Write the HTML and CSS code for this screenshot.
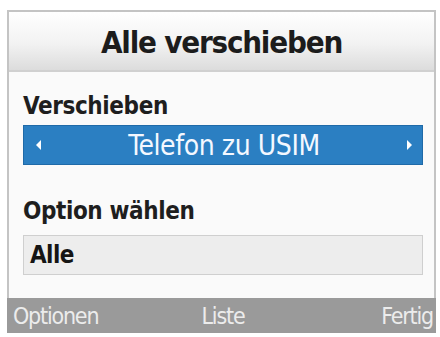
FILE: index.html
```html
<!DOCTYPE html>
<html lang="de">
<head>
<meta charset="utf-8">
<link rel="stylesheet" href="styles.css">
</head>
<body>
<div class="screen">
  <div class="title">Alle verschieben</div>
  <div class="content">
    <div class="label first">Verschieben</div>
    <div class="selector">
      <span class="arrow left"></span>
      <span class="sel-text">Telefon zu USIM</span>
      <span class="arrow right"></span>
    </div>
    <div class="label second">Option wählen</div>
    <div class="field">Alle</div>
  </div>
  <div class="softkeys">
    <span class="sk sk-left">Optionen</span>
    <span class="sk sk-mid">Liste</span>
    <span class="sk sk-right">Fertig</span>
  </div>
</div>
</body>
</html>
```
FILE: styles.css
```css
html, body {
  margin: 0;
  padding: 0;
  background: #ffffff;
  width: 440px;
  height: 337px;
  overflow: hidden;
}
.screen {
  margin: 10px 0 0 7px;
  width: 429px;
  height: 323px;
  box-sizing: border-box;
  border: 2px solid #c4c4c4;
  border-bottom: none;
  display: flex;
  flex-direction: column;
  background: #fafafa;
  font-family: "DejaVu Sans Condensed", "DejaVu Sans", sans-serif;
}
.title {
  height: 60px;
  box-sizing: border-box;
  border-bottom: 2px solid #d0d0d0;
  background: linear-gradient(#ffffff 0%, #f2f2f2 55%, #dcdcdc 100%);
  display: flex;
  align-items: center;
  justify-content: center;
  font-weight: bold;
  font-size: 31px;
  letter-spacing: -1.2px;
  color: #1c1c1c;
  padding-top: 2px;
}
.content {
  flex: 1;
  padding: 0 11px 0 14px;
  display: flex;
  flex-direction: column;
}
.label {
  font-weight: bold;
  font-size: 24px;
  letter-spacing: -0.4px;
  color: #1e1e1e;
  line-height: 26px;
}
.label.first { margin-top: 21px; }
.label.second { margin-top: 33px; }
.selector {
  margin-top: 6px;
  height: 40px;
  background: #2b7fc2;
  border: 1px solid #1f6aa8;
  box-sizing: border-box;
  display: flex;
  align-items: center;
  justify-content: space-between;
  padding: 0 10px 0 12px;
  color: #ffffff;
}
.sel-text {
  font-size: 28px;
  letter-spacing: -0.4px;
  color: #f4f8ff;
}
.arrow {
  width: 0;
  height: 0;
  border-top: 5px solid transparent;
  border-bottom: 5px solid transparent;
}
.arrow.left { border-right: 5px solid #ffffff; }
.arrow.right { border-left: 5px solid #ffffff; }
.field {
  margin-top: 11px;
  height: 40px;
  box-sizing: border-box;
  background: #ededed;
  border: 1px solid #cfcfcf;
  display: flex;
  align-items: center;
  padding-left: 6px;
  font-weight: bold;
  font-size: 24px;
  letter-spacing: -0.6px;
  color: #151515;
}
.softkeys {
  height: 35px;
  margin: 0 -2px 0 -2px;
  background: #9a9a9a;
  display: grid;
  grid-template-columns: 1fr auto 1fr;
  align-items: center;
  padding: 0 3px 0 6px;
}
.sk {
  font-size: 23px;
  letter-spacing: -1.2px;
  color: #ececec;
}
.sk-mid { text-align: center; }
.sk-right { text-align: right; }
```
